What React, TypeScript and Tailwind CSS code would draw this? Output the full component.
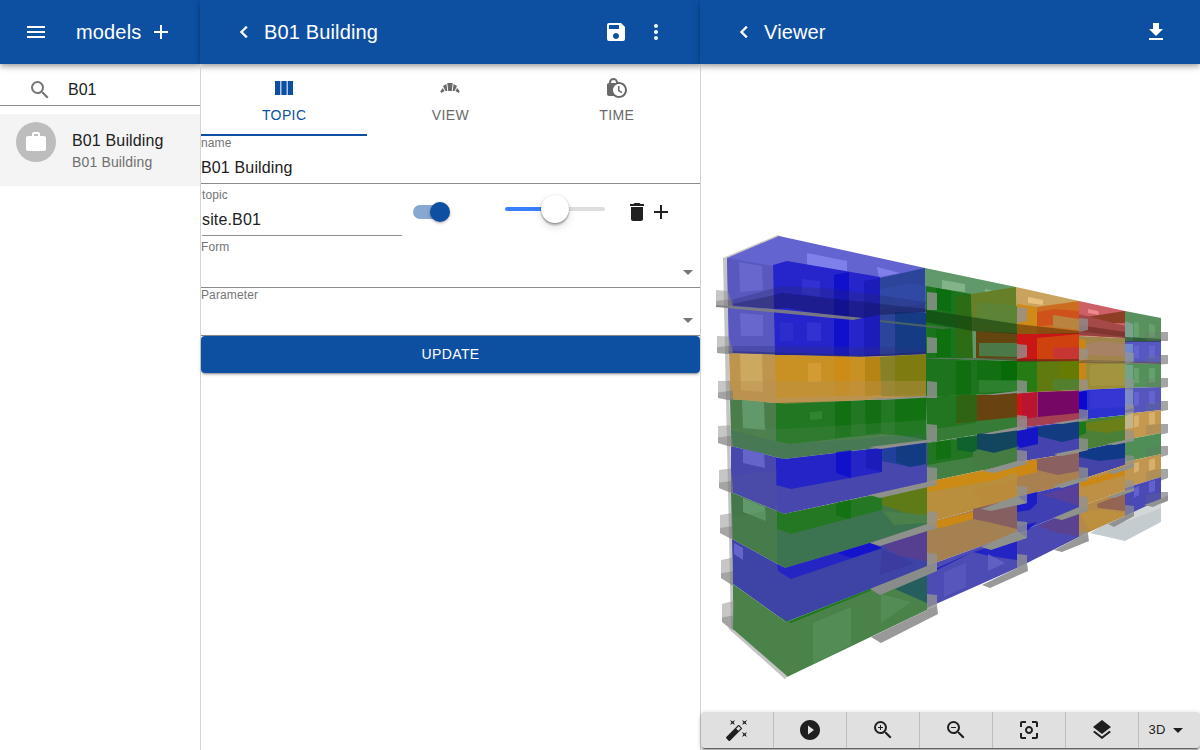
import type { ReactNode } from "react";
import {
  MdAdd,
  MdArrowDropDown,
  MdAutoFixHigh,
  MdCenterFocusWeak,
  MdDelete,
  MdGetApp,
  MdLayers,
  MdLockClock,
  MdMenu,
  MdMoreVert,
  MdPlayCircleFilled,
  MdSave,
  MdSearch,
  MdWork,
  MdZoomIn,
  MdZoomOut,
} from "react-icons/md";

type Shape = [points: string, fill: string, opacity?: number];

// Outer faces of every storey, column by column.
const faces: Shape[] = [
  ["723,258 778,235 782,237 727,259 734,631 787,676 785,679 731,630", "#c4c4c4"],
  // far end ghost floor
  ["1090,533 1125,541 1161,522 1161,495 1125,512", "#c4cccf"],
  ["1125,512 1161,495 1161,508 1125,522", "#d2d7d9"],
  // column 1
  ["727,258 779,236 925,268 926,355 860,357 729,353", "#6464d0"],
  ["727,258 773,266 775,355 729,353", "#5858be"],
  ["729,353 860,357 926,354 926,397 786,404 730,399", "#bf944d"],
  ["730,399 786,404 926,397 927,442 784,459 731,446", "#4a7d4a"],
  ["731,446 784,459 927,442 927,483 784,514 731,492", "#4747ae"],
  ["731,492 784,514 927,483 927,526 785,568 732,539", "#44784a"],
  ["732,539 785,568 927,526 927,567 786,622 733,584", "#3e44a6"],
  ["733,584 786,622 927,567 927,610 787,677 733,630", "#4a824a"],
  // column 2
  ["925,268 1016,287 1017,361 926,358", "#62996a"],
  ["926,358 1017,361 1017,393 926,397", "#1c741c"],
  ["926,397 1017,393 1017,428 927,443", "#367c36"],
  ["927,443 1017,428 1017,463 927,482", "#447f44"],
  ["927,482 1017,463 1017,498 927,523", "#b98e3c"],
  ["927,523 1017,498 1017,533 927,566", "#a58050"],
  ["927,566 1017,533 1017,568 927,608", "#4c4cb4"],
  // column 3
  ["1016,287 1079,301 1079,333 1017,334", "#caa35e"],
  ["1017,334 1079,331 1079,361 1017,361", "#cb1616"],
  ["1017,361 1079,361 1079,390 1017,393", "#607a10"],
  ["1017,393 1079,390 1079,421 1017,428", "#a53f52"],
  ["1017,428 1079,421 1079,452 1017,462", "#4543ae"],
  ["1017,462 1079,452 1079,482 1017,497", "#a98050"],
  ["1017,497 1079,482 1079,508 1017,533", "#4040b2"],
  ["1017,533 1079,508 1079,537 1017,568", "#4c48b2"],
  // column 4
  ["1079,301 1125,311 1125,338 1079,336", "#cc6066"],
  ["1079,336 1125,338 1125,362 1079,361", "#a0844a"],
  ["1079,361 1125,362 1125,388 1079,390", "#9c8c38"],
  ["1079,390 1125,388 1125,415 1079,420", "#2c32cf"],
  ["1079,420 1125,415 1125,441 1079,451", "#4a8038"],
  ["1079,451 1125,441 1125,465 1079,480", "#4444a8"],
  ["1079,480 1125,465 1125,490 1079,507", "#bd9046"],
  ["1079,507 1125,490 1125,515 1079,537", "#b48a48"],
  // column 5
  ["1125,311 1161,318 1161,341 1125,341", "#5a905e"],
  ["1125,341 1161,341 1161,364 1125,363", "#5757c2"],
  ["1125,363 1161,364 1161,387 1125,388", "#54905a"],
  ["1125,388 1161,387 1161,410 1125,414", "#5555bd"],
  ["1125,414 1161,410 1161,433 1125,440", "#c4984e"],
  ["1125,440 1161,433 1161,454 1125,462", "#4f8e57"],
  ["1125,462 1161,454 1161,477 1125,488", "#c09650"],
  ["1125,488 1161,477 1161,499 1125,516", "#4a49b6"],
];

// Rooms and cores seen through the translucent faces.
const rooms: Shape[] = [
  // windows on the far walls
  ["739,262 762,266 763,290 740,292", "#6c6cd2", 0.75],
  ["740,313 763,315 763,336 741,336", "#6c6cd2", 0.75],
  ["807,253 847,261 847,271 807,266", "#8080ea"],
  ["877,267 900,273 879,277", "#8080ea"],
  // column 1, storeys 1 and 2
  ["773,265 787,261 880,277 880,356 775,355", "#2525cb"],
  ["834,275 849,272 849,356 834,355", "#1111cc"],
  ["864,281 880,278 880,356 864,356", "#1c1cba"],
  ["880,278 925,268 926,354 880,356", "#2c449a"],
  ["880,289 909,283 926,286 926,304 880,310", "#344cab", 0.6],
  ["895,312 926,313 926,353 895,355", "#153b85"],
  ["802,279 820,281 820,297 802,294", "#3232d2"],
  ["807,322 821,323 821,341 807,341", "#3232d2"],
  ["780,322 793,323 793,341 780,341", "#3030cf", 0.7],
  // storey 3
  ["740,354 762,354 763,392 741,390", "#cda861"],
  ["775,355 880,357 881,395 776,398", "#c99023"],
  ["834,356 850,357 850,396 835,396", "#cc8c16"],
  ["865,357 880,357 881,395 865,396", "#b48515"],
  ["880,357 926,354 926,397 881,396", "#878024"],
  ["895,356 926,355 926,394 895,395", "#7e7c10"],
  ["808,363 821,363 821,382 808,382", "#d29b34"],
  // storey 4
  ["742,400 764,402 765,430 743,428", "#62996a"],
  ["776,403 881,400 881,434 789,444 776,441", "#227722"],
  ["835,402 851,401 851,436 835,438", "#127012"],
  ["865,400 881,400 881,433 866,434", "#127012"],
  ["881,400 926,397 926,438 881,434", "#237823"],
  ["895,399 926,398 926,440 895,434", "#127212"],
  ["810,412 822,411 822,419 810,420", "#328332"],
  // storey 5
  ["743,449 764,453 765,468 743,463", "#6464ca"],
  ["776,458 786,459 882,448 882,472 791,489 776,485", "#2525c7"],
  ["836,452 851,450 851,478 836,473", "#1111cc"],
  ["866,450 882,449 882,472 866,468", "#1c1cbb"],
  ["882,449 926,443 926,462 911,467 882,461", "#20409b"],
  ["896,447 926,443 926,464 910,467 896,462", "#123b82"],
  // storey 6
  ["743,498 765,507 766,521 743,512", "#62996a"],
  ["777,511 784,514 882,494 882,510 791,534 777,529", "#247824"],
  ["836,503 851,500 851,520 836,515", "#147214"],
  ["882,494 927,484 927,516 906,513 882,505", "#5f7b18"],
  ["777,529 791,534 882,510 927,521 927,526 785,568 777,562", "#3c7350"],
  ["882,511 927,515 927,523 894,525", "#4b804b"],
  // storey 7
  ["734,543 743,548 743,560 734,554", "#6464ca"],
  ["777,564 785,568 870,543 882,548 791,579 778,571", "#2525c4"],
  ["838,553 870,543 882,548 852,558", "#1414cc"],
  ["882,546 927,530 927,561 899,556", "#563f91"],
  ["882,549 915,563 880,575", "#3c3ca0"],
  // storey 8
  ["778,615 787,622 870,589 882,586 791,623", "#207820"],
  ["813,623 851,607 851,645 813,664", "#548c56"],
  ["881,594 911,602 881,623", "#548c56"],
  ["895,589 927,575 927,603", "#255e5d"],
  // column 2
  ["942,280 965,284 965,292 942,289", "#82b487"],
  ["985,289 999,292 985,293", "#82b487"],
  ["926,286 971,294 971,358 926,358", "#1a741c"],
  ["936,288 951,291 951,312 936,309", "#0c6e10"],
  ["936,326 951,327 951,357 936,357", "#0f7010"],
  ["971,294 1016,287 1017,333 973,331", "#678028"],
  ["956,296 971,294 973,358 956,357", "#2d6b14"],
  ["977,302 1017,306 1017,324 977,321", "#5c8336"],
  ["976,331 1017,333 1017,361 976,358", "#65450f"],
  ["979,343 1017,343 1017,357 979,356", "#4b7a48"],
  ["956,361 971,361 971,394 956,395", "#106e10"],
  ["977,361 1017,361 1017,380 977,380", "#127012"],
  ["1001,361 1017,361 1017,380 1001,380", "#076b07"],
  ["979,380 1017,381 1017,391 979,393", "#2d802d"],
  ["926,397 976,394 976,423 927,430", "#227622"],
  ["956,396 1017,393 1017,417 956,423", "#68430f"],
  ["956,396 977,395 977,421 956,422", "#2f6412"],
  ["927,443 973,438 973,457 927,465", "#227622"],
  ["936,442 951,440 951,458 936,460", "#107012"],
  ["957,438 977,436 977,453 957,450", "#10622c"],
  ["977,434 1017,429 1017,447 994,453 977,449", "#12465f"],
  ["973,452 977,450 994,453 1017,447 1017,462 985,470 973,468", "#447c42"],
  ["927,482 973,473 1035,460 1028,468 996,480 927,492", "#cc8b15"],
  ["973,489 1017,480 1017,498 984,508", "#ba8b3a"],
  ["973,509 1017,498 1017,529 988,522 973,519", "#865f60"],
  ["927,523 973,512 973,519 944,527 927,530", "#cc8812"],
  ["937,568 973,552 1017,538 1017,560 989,556 973,552 937,570", "#2424c4"],
  ["944,572 966,563 966,587 944,597", "#5656bc"],
  ["988,554 1005,563 988,571", "#6060c4"],
  // column 3
  ["1028,297 1043,300 1043,305 1028,303", "#e8c37d"],
  ["1017,304 1037,307 1037,334 1017,334", "#d08a18"],
  ["1037,307 1079,301 1079,333 1037,334", "#cc6e20"],
  ["1037,312 1054,309 1079,311 1079,323 1037,326", "#d0521b"],
  ["1053,315 1079,319 1079,330 1053,327", "#b88440"],
  ["1037,338 1079,334 1079,361 1037,360", "#cf420f"],
  ["1053,348 1079,347 1079,360 1053,358", "#c83634"],
  ["1017,361 1037,361 1037,391 1017,393", "#277b15"],
  ["1059,361 1079,361 1079,383 1059,382", "#657b04"],
  ["1053,379 1079,379 1079,390 1053,390", "#52802e"],
  ["1017,394 1037,392 1037,417 1017,420", "#b91530"],
  ["1017,394 1022,394 1022,419 1017,420", "#cf1318"],
  ["1038,392 1079,391 1079,413 1038,417", "#760764"],
  ["1017,431 1038,427 1038,444 1020,448 1017,445", "#1515c7"],
  ["1038,427 1079,421 1079,438 1062,442 1038,436", "#123b82"],
  ["1017,463 1037,460 1037,472 1017,477", "#cc8812"],
  ["1037,459 1079,453 1079,471 1058,475 1037,470", "#8b6060"],
  ["1017,497 1037,492 1037,503 1030,510 1017,512", "#1d1dc8"],
  ["1042,495 1079,485 1079,506 1057,499", "#58409a"],
  ["1017,527 1037,522 1028,530 1017,533", "#1d1dc8"],
  ["1038,526 1079,509 1079,536 1058,533", "#5b4291"],
  // column 4
  ["1088,309 1098,311 1099,315 1088,313", "#ee8a8b"],
  ["1086,317 1125,311 1125,323 1086,323", "#8e3e25"],
  ["1079,314 1125,326 1125,337 1079,331", "#a54848"],
  ["1079,339 1086,340 1086,389 1079,390", "#c98618"],
  ["1086,344 1103,341 1125,344 1125,357 1086,355", "#a88265"],
  ["1090,365 1125,362 1125,385 1090,386", "#a19540"],
  ["1079,391 1087,391 1087,416 1079,418", "#0909d1"],
  ["1090,391 1125,389 1125,407 1090,409", "#3636d4"],
  ["1086,423 1125,417 1125,430 1106,433 1086,430", "#6a7f18"],
  ["1079,422 1086,422 1086,433 1079,436", "#197818"],
  ["1079,451 1125,442 1125,458 1099,461 1079,457", "#103a88"],
  ["1079,482 1125,469 1125,475 1097,483 1082,487", "#cc8812"],
  ["1097,504 1125,493 1125,511 1098,508", "#956553"],
  ["1079,512 1098,509 1125,513 1125,516 1090,531", "#bd9040"],
  // column 5
  ["1125,321 1133,324 1133,341 1125,341", "#79a28f"],
  ["1125,344 1133,344 1133,362 1125,362", "#7089ca"],
  ["1125,365 1133,365 1133,387 1125,388", "#74a487"],
  ["1125,390 1133,389 1133,408 1125,410", "#7c8bc5"],
  ["1125,413 1133,412 1133,428 1125,429", "#c2b48b"],
  ["1134,322 1139,323 1139,337 1134,337", "#6da673", 0.7],
  ["1149,324 1155,325 1155,337 1149,337", "#6da673", 0.7],
  ["1134,346 1139,346 1139,358 1134,358", "#6868d4", 0.8],
  ["1149,346 1155,346 1155,358 1149,358", "#6868d4", 0.8],
  ["1134,368 1139,368 1139,383 1134,383", "#6da673", 0.7],
  ["1149,368 1155,368 1155,382 1149,383", "#6da673", 0.7],
  ["1134,392 1139,392 1139,405 1134,406", "#6868d4", 0.8],
  ["1149,391 1155,391 1155,404 1149,404", "#6868d4", 0.8],
  ["1134,416 1139,415 1139,426 1134,428", "#d6b06c"],
  ["1149,413 1155,412 1155,424 1149,425", "#d6b06c"],
  ["1134,463 1139,462 1139,471 1134,473", "#d6b06c"],
  ["1149,460 1155,458 1155,469 1149,471", "#d6b06c"],
  ["1134,488 1139,486 1139,495 1134,498", "#6868d4", 0.8],
  ["1149,482 1155,480 1155,491 1149,493", "#6868d4", 0.8],
];

// Balcony slabs running along the facade.
const slabs: Shape[] = [
  ["728,301 782,286 834,289 926,302 926,309 780,293 728,305", "#28286e", 0.3],
  ["728,305 782,293 926,309 926,312 879,315 853,320 787,308 774,309", "#15154e", 0.48],
  ["716,305 728,306 786,310 863,318 853,320 716,307", "#818181", 0.9],
  ["728,346 786,346 926,348 926,354 860,357 728,353", "#303080", 0.3],
  ["728,351 860,355 926,352 926,354 860,357 728,353", "#202060", 0.4],
  ["926,310 1017,324 1017,334 973,331 926,322", "#104010", 0.6],
  ["880,320 955,328 942,329 880,322", "#5a705a", 0.7],
  ["1017,324 1079,331 1079,334 1017,334", "#5d3609", 0.6],
  ["1079,325 1125,332 1125,338 1079,335", "#5d2218", 0.5],
  ["1125,337 1161,339 1161,342 1125,342", "#174025", 0.6],
  ["926,358 1017,358 1017,361 926,359", "#4a604a", 0.6],
  ["1017,359 1079,359 1079,361 1017,362", "#5a2a15", 0.6],
  ["1079,360 1161,362 1161,364 1079,363", "#60503c", 0.55],
  ["728,381 926,381 926,397 786,404 730,399", "#b89050", 0.4],
  ["731,428 786,429 926,420 926,442 784,459 731,446", "#5c8c60", 0.22],
  ["731,430 786,444 926,434 926,442 784,459 731,446", "#3c6c62", 0.3],
  ["731,475 777,470 777,509 731,492", "#54549a", 0.25],
  ["732,518 777,508 777,562 732,539", "#4c8652", 0.3],
];

const band = (x: number, width: number, opacity: number, lift: number, spans: [number, number][]): Shape[] =>
  spans.map(([top, bottom]) => [
    `${x},${top} ${x + width},${top + 1} ${x + width},${bottom} ${x},${bottom + lift}`,
    "#929292",
    opacity,
  ]);

// Projecting end blocks of the balconies: left edge, four bays, far edge.
const blocks: Shape[] = [
  ...[
    [716, 290, 307], [717, 336, 353], [718, 381, 398], [718, 426, 443],
    [719, 470, 488], [720, 515, 533], [721, 560, 578], [722, 604, 622],
  ].flatMap(([x, top, bottom], i): Shape[] => [
    [`${x},${top} ${x + 12},${top + 1 - i * 0.6} 733,${bottom + i * 1.3} ${x + 9},${bottom + i} ${x},${bottom}`, "#929292", 0.52],
    [`${x},${bottom - 6 + i * 0.2} 733,${bottom - 8 + i * 0.2} 733,${bottom + i * 1.3} ${x},${bottom}`, "#707070", 0.4],
  ]),
  ...band(927, 10, 0.8, 0, [
    [292, 310], [337, 353], [381, 398], [424, 441], [467, 485], [511, 529], [553, 571], [594, 613],
  ]),
  ...band(1017, 10, 0.78, 2, [
    [307, 321], [344, 357], [380, 392], [415, 429], [450, 464], [486, 503], [521, 538], [554, 571],
  ]),
  ...band(1079, 9, 0.75, 2, [
    [318, 330], [348, 359], [379, 390], [409, 420], [438, 450], [467, 480], [496, 510], [531, 541],
  ]),
  ...band(1125, 9, 0.65, 3, [
    [352, 362], [378, 388], [404, 413], [430, 440], [455, 466], [480, 490], [505, 516],
  ]),
  ...[332, 355, 378, 401, 424, 446, 469, 492].flatMap((top, i): Shape[] => [
    [`1146,${top + i * 0.4} 1161,${top} 1161,${top + 9} 1146,${top + 9 + i * 0.5}`, "#707070", 0.22],
    [`1161,${top} 1168,${top} 1168,${top + 9} 1161,${top + 9 + i * 0.4}`, "#a0a0a0", 0.95],
  ]),
];

// Undersides of the balconies on the lower storeys.
const undersides: Shape[] = [
  ["868,399 926,396 937,397 882,400", "#8d908b"],
  ["869,447 926,440 937,441 880,449", "#8d908b"],
  ["869,495 927,482 937,485 880,498", "#8d908b"],
  ["870,543 927,524 937,528 880,546", "#8d908b"],
  ["870,589 927,566 937,565 937,571 880,595", "#898c8b"],
  ["871,637 927,610 937,606 938,614 881,643", "#999999"],
  ["984,395 1017,391 1027,392 994,395", "#8f918c"],
  ["982,434 1017,427 1027,429 992,434", "#8f918c"],
  ["982,471 1017,461 1027,464 994,473", "#8f918c"],
  ["981,509 1017,496 1027,503 991,511", "#8f918c"],
  ["981,547 1017,531 1027,538 991,550", "#8f918c"],
  ["982,585 1017,568 1027,563 1028,571 990,588", "#999999"],
  ["1054,423 1079,419 1088,420 1062,424", "#8f918c"],
  ["1054,454 1079,449 1088,450 1062,456", "#8f918c"],
  ["1053,486 1079,478 1088,480 1062,488", "#8f918c"],
  ["1053,518 1079,507 1088,511 1062,520", "#8f918c"],
  ["1054,550 1079,537 1088,534 1089,541 1062,552", "#999999"],
  ["1107,444 1134,438 1134,441 1114,445", "#8f918c"],
  ["1107,472 1134,464 1134,467 1114,474", "#8f918c"],
  ["1107,497 1134,488 1134,491 1114,498", "#8f918c"],
  ["1108,524 1134,512 1134,516 1114,527", "#929292"],
  ["1144,505 1161,499 1168,495 1168,500 1153,507", "#929292"],
  ["727,627 734,630 787,676 785,679 731,631", "#c4c4c4"],
];

const layers: Shape[][] = [faces, rooms, slabs, blocks, undersides];

function BuildingModel() {
  return (
    <svg viewBox="701 64 499 648" className="block h-[648px] w-[499px]" role="img">
      {layers.map((layer, i) => (
        <g key={i}>
          {layer.map(([points, fill, opacity = 1], j) => (
            <polygon key={j} points={points} fill={fill} fillOpacity={opacity} />
          ))}
        </g>
      ))}
    </svg>
  );
}

function BackIcon() {
  return (
    <svg viewBox="0 0 24 24" className="mr-2 size-6 shrink-0" fill="currentColor" stroke="currentColor" strokeWidth="0.4">
      <path d="M15.41 7.41 14 6l-6 6 6 6 1.41-1.41L10.83 12z" />
    </svg>
  );
}

function ColumnsIcon() {
  return (
    <svg viewBox="0 0 24 24" className="size-6" fill="currentColor">
      <path d="M14.67 5v14H9.33V5h5.34zm1 14H21V5h-5.33v14zm-7.34 0V5H3v14h5.33z" />
    </svg>
  );
}

function FanIcon() {
  return (
    <svg viewBox="0 0 24 24" className="size-6" fill="currentColor">
      <path d="M9.3 7h5.4l-.9 8h-3.6zM5 10.1l3.4-2 .9 6.9H7.5zM19 10.1l-3.4-2-.9 6.9h1.8zM4.8 12.1 6.6 15l-3.4 2.1-.9-1.8zM19.2 12.1 17.4 15l3.4 2.1.9-1.8z" />
    </svg>
  );
}

const barShadow =
  "shadow-[0_2px_4px_-1px_rgba(0,0,0,0.2),0_4px_5px_0_rgba(0,0,0,0.14),0_1px_10px_0_rgba(0,0,0,0.12)]";

function Header({ className, children }: { className: string; children: ReactNode }) {
  return (
    <header className={`flex h-16 shrink-0 items-center bg-[#0d50a2] text-white ${barShadow} ${className}`}>
      {children}
    </header>
  );
}

function Title({ children }: { children: ReactNode }) {
  return <h1 className="text-[20px] leading-8 tracking-[0.0075em] whitespace-nowrap">{children}</h1>;
}

function Field({ label, value, select }: { label: string; value?: string; select?: boolean }) {
  return (
    <div className="flex h-12 w-full flex-col border-b border-[#8c8c8c]">
      <span className="h-4 text-[12px] leading-[15px] tracking-[0.0094em] text-[#757575]">{label}</span>
      <div className="flex h-[31px] items-center justify-between text-[16px] tracking-[0.0094em] text-[#212121]">
        <span>{value}</span>
        {select && <MdArrowDropDown className="size-6 text-[#757575]" />}
      </div>
    </div>
  );
}

function Tab({ icon, label, active }: { icon: ReactNode; label: string; active?: boolean }) {
  return (
    <div
      className={`flex flex-1 flex-col items-center border-b-2 pt-3 text-[14px] tracking-[0.02857em] ${
        active ? "border-[#0d50a2] text-[#0d50a2]" : "border-transparent text-[#696969]"
      }`}
    >
      {icon}
      <span className="mt-[3px] leading-6">{label}</span>
    </div>
  );
}

const tools = [MdAutoFixHigh, MdPlayCircleFilled, MdZoomIn, MdZoomOut, MdCenterFocusWeak, MdLayers];

export default function App() {
  return (
    <div className="flex h-[750px] w-[1200px] overflow-hidden bg-white font-['Liberation_Sans',Arial,sans-serif] text-[#212121]">
      <aside className="flex w-[200px] shrink-0 flex-col">
        <Header className="pr-[27px] pl-6">
          <MdMenu className="mr-7 size-6 shrink-0" />
          <Title>models</Title>
          <MdAdd className="ml-auto size-6 shrink-0" />
        </Header>
        <div className="mt-2 flex h-[34px] items-center border-b border-[#8c8c8c] pt-[2px] pl-7">
          <MdSearch className="size-6 text-[#757575]" />
          <span className="ml-4 text-[16px]">B01</span>
        </div>
        <div className="mt-2 flex h-[72px] bg-[#f4f4f4] px-4 pt-2">
          <div className="flex size-10 shrink-0 items-center justify-center rounded-full bg-[#bdbdbd] text-white">
            <MdWork className="size-6" />
          </div>
          <div className="ml-4 pt-[7px] whitespace-nowrap">
            <p className="text-[16px] leading-6 tracking-[0.0094em]">B01 Building</p>
            <p className="-mt-px text-[14px] leading-5 tracking-[0.0107em] text-[#6f6f6f]">B01 Building</p>
          </div>
        </div>
      </aside>

      <main className="flex w-[500px] shrink-0 flex-col">
        <Header className="pr-8 pl-8">
          <BackIcon />
          <Title>B01 Building</Title>
          <MdSave className="mr-4 ml-auto size-6" />
          <MdMoreVert className="size-6" />
        </Header>
        <div className="flex flex-1 flex-col border-l border-[#d4d4d4]">
          <div className="flex h-[72px]">
            <Tab active label="TOPIC" icon={<ColumnsIcon />} />
            <Tab label="VIEW" icon={<FanIcon />} />
            <Tab label="TIME" icon={<MdLockClock className="size-6" />} />
          </div>
          <Field label="name" value="B01 Building" />
          <div className="flex h-14 items-center pl-px">
            <div className="flex h-12 w-[200px]">
              <Field label="topic" value="site.B01" />
            </div>
            <div className="ml-[11px] flex h-[14px] w-[37px] items-center rounded-full">
              <div className="h-[14px] w-[34px] rounded-full bg-[#86a8d1]" />
              <div className="-ml-[17px] size-5 shrink-0 rounded-full bg-[#0d50a2] shadow-[0_1px_3px_rgba(0,0,0,0.35)]" />
            </div>
            <div className="mb-[6px] ml-[55px] flex w-[100px] items-center">
              <div className="h-1 flex-1 rounded-l bg-[#3880ff]" />
              <div className="z-10 -mx-[14px] size-7 rounded-full bg-white shadow-[0_3px_1px_rgba(0,0,0,0.1),0_4px_8px_rgba(0,0,0,0.13),0_0_0_1px_rgba(0,0,0,0.02),0_1px_2px_rgba(0,0,0,0.35)]" />
              <div className="h-1 flex-1 rounded-r bg-[#dedede]" />
            </div>
            <MdDelete className="ml-5 size-6" />
            <MdAdd className="size-6" />
          </div>
          <Field label="Form" select />
          <Field label="Parameter" select />
          <button className="h-[37px] rounded bg-[#0d50a2] text-[14px] tracking-[0.02857em] text-white shadow-[0_3px_1px_-2px_rgba(0,0,0,0.2),0_2px_2px_0_rgba(0,0,0,0.14),0_1px_5px_0_rgba(0,0,0,0.12)]">
            UPDATE
          </button>
        </div>
      </main>

      <section className="flex w-[500px] shrink-0 flex-col">
        <Header className="z-10 pr-8 pl-8">
          <BackIcon />
          <Title>Viewer</Title>
          <MdGetApp className="ml-auto size-6" />
        </Header>
        <div className="flex flex-1 flex-col border-l border-[#d4d4d4]">
          <BuildingModel />
          <div className="flex h-9 rounded bg-[#e0e0e0] text-[#1f1f1f] shadow-[0_3px_1px_-2px_rgba(0,0,0,0.4),0_2px_2px_0_rgba(0,0,0,0.3),0_1px_5px_0_rgba(0,0,0,0.2)]">
            {tools.map((Icon, i) => (
              <div key={i} className="flex w-[73px] shrink-0 items-center justify-center border-r border-[#bdbdbd]">
                <Icon className="size-6" />
              </div>
            ))}
            <div className="flex flex-1 items-center pl-[9.5px] text-[13px] tracking-[0.02857em]">
              <span>3D</span>
              <MdArrowDropDown className="size-6" />
            </div>
          </div>
        </div>
      </section>
    </div>
  );
}
